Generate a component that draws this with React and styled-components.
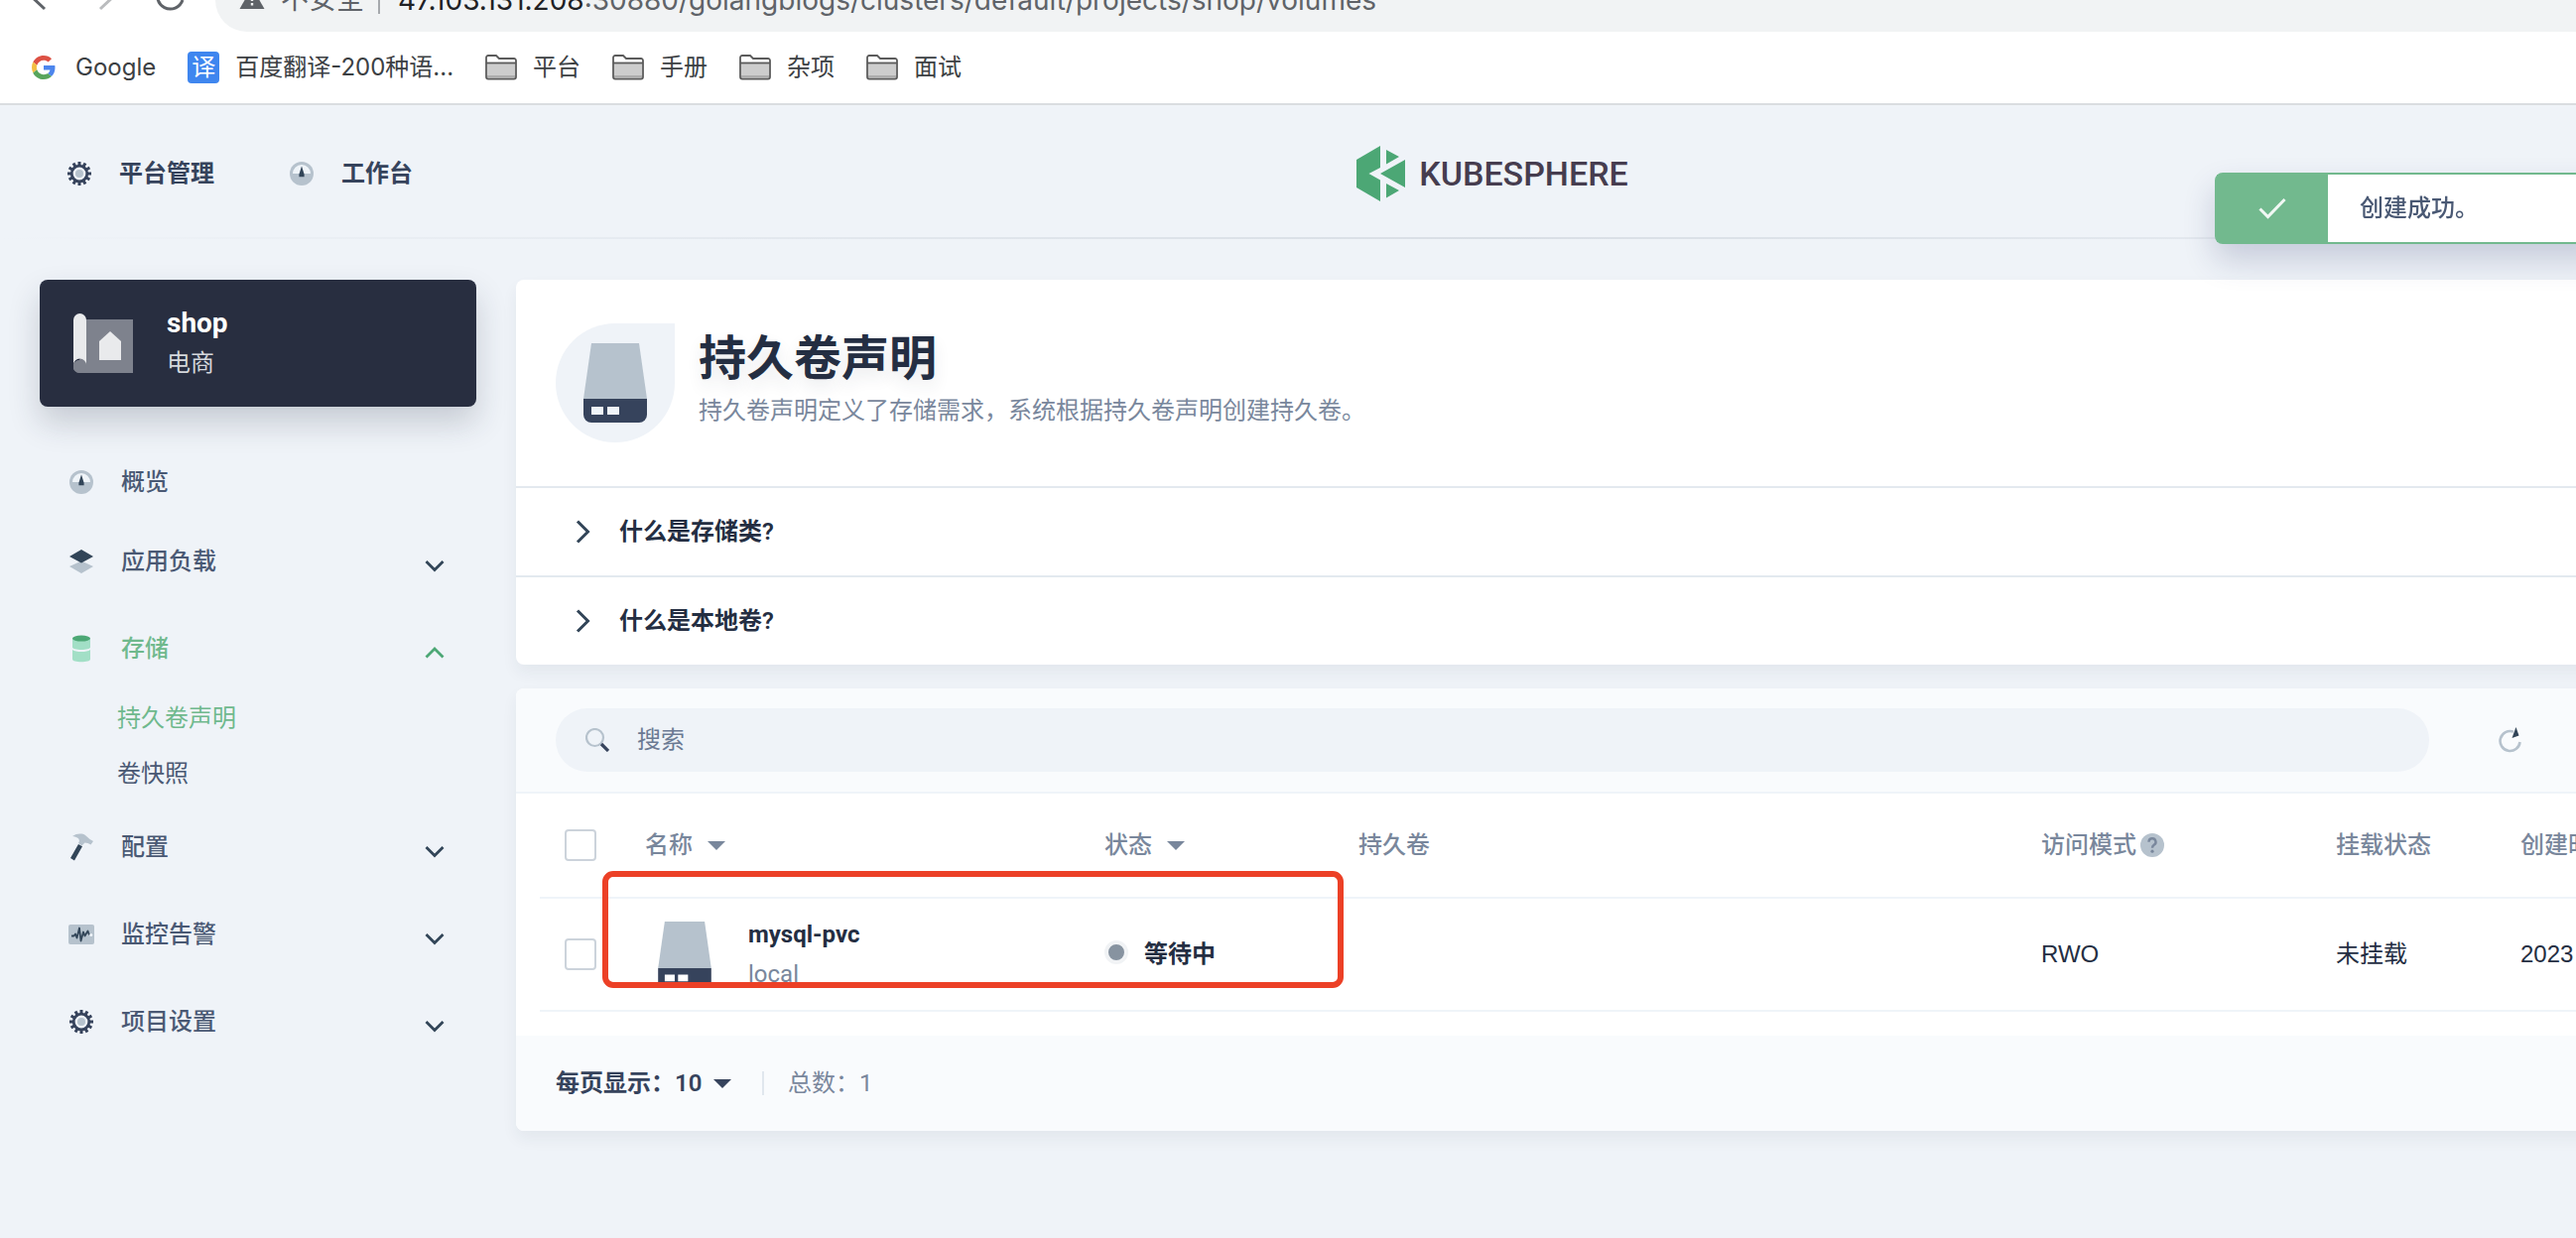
import React from 'react';
import styled, { createGlobalStyle } from 'styled-components';

const GlobalStyle = createGlobalStyle`
    *, *::before, *::after {
        box-sizing: border-box;
    }

    body {
        margin: 0;
        background: #eff3f8;
        color: #242e42;
        font-family: Roboto, 'Noto Sans CJK SC', sans-serif;
        font-size: 24px;
        line-height: 40px;
    }

    button, input, select {
        font: inherit;
        color: inherit;
        border: none;
        background: none;
        padding: 0;
        margin: 0;
    }

    a {
        color: inherit;
        text-decoration: none;
    }
`;

/* ---------- icons ---------- */

const TEETH = [0, 30, 60, 90, 120, 150, 180, 210, 240, 270, 300, 330];

const GearIcon = () => (
    <svg width="24" height="24" viewBox="0 0 24 24">
        {TEETH.map((angle) => (
            <rect key={angle} x="10.5" y="0" width="3" height="4" fill="#36435c" transform={`rotate(${angle} 12 12)`} />
        ))}
        <circle cx="12" cy="12" r="7.8" fill="none" stroke="#36435c" strokeWidth="2.8" />
        <circle cx="12" cy="12" r="4" fill="#b6c2cd" />
    </svg>
);

const DashboardIcon = () => (
    <svg width="24" height="24" viewBox="0 0 24 24">
        <circle cx="12" cy="12" r="12" fill="#b6c2cd" />
        <path d="M3 12a9 9 0 0 1 18 0z" fill="#eff4f9" />
        <path d="M12 4.5l2.6 8.2v2.6H9.4v-2.6z" fill="#324558" />
    </svg>
);

const LayersIcon = () => (
    <svg width="24" height="24" viewBox="0 0 24 24">
        <path d="M12 11.5l12 5.5-12 7-12-7z" fill="#b6c2cd" />
        <path d="M12 0l12 7-12 6.5L0 7z" fill="#324558" />
    </svg>
);

const DatabaseIcon = () => (
    <svg width="24" height="28" viewBox="0 0 24 28">
        <path d="M3 3.5h18v9c0 1.500-4 2.500-9 2.500s-9-1-9-2.500z" fill="#a2dfc6" />
        <path d="M3 15c2 1.500 5 2 9 2s7-.5 9-2v9.500c0 1.700-4 2.800-9 2.800s-9-1.100-9-2.800z" fill="#a2dfc6" />
        <ellipse cx="12" cy="3.600" rx="9" ry="3" fill="#4ca775" />
    </svg>
);

const HammerIcon = () => (
    <svg width="24" height="28" viewBox="0 0 24 28">
        <path d="M3 3C7 0 13-.2 16 2l4.500 4 3.500 2-2.500 3.500-3-1.500-3-.5-3 3-3.500-2.500C11 7 10 4 3 3z" fill="#b6c2cd" />
        <path d="M9 11l4 2.300L5 27.500 1 25z" fill="#324558" />
    </svg>
);

const MonitorIcon = () => (
    <svg width="26" height="20" viewBox="0 0 26 20">
        <rect width="26" height="20" rx="2" fill="#b6c2cd" />
        <path d="M3 11.500h2.500l1.500-2 1.500 4 2.500-10 1.500 13 2.500-9 1.500 4 3-5 1.500 4" fill="none" stroke="#324558" strokeWidth="1.800" strokeLinejoin="round" />
        <circle cx="22.800" cy="10.500" r="1.500" fill="#eff4f9" />
    </svg>
);

const ChevronIcon = ({ up }) => (
    <svg width="24" height="24" viewBox="0 0 24 24" fill="none" strokeWidth="2.800">
        <path d={up ? 'M3.500 16.500l8.500-8.500 8.500 8.500' : 'M3.500 8l8.500 8.500L20.500 8'} stroke={up ? '#4ca775' : '#324558'} />
    </svg>
);

const ChevronRightIcon = () => (
    <svg width="24" height="24" viewBox="0 0 24 24" fill="none">
        <path d="M6 1.500L16.500 12 6 22.500" stroke="#324558" strokeWidth="3" />
    </svg>
);

const CaretIcon = ({ color }) => (
    <svg width="18" height="9" viewBox="0 0 18 9">
        <path d="M0 0h18L9 9z" fill={color} />
    </svg>
);

const DiskIcon = ({ width, height, hole }) => (
    <svg width={width} height={height} viewBox="0 0 64 80">
        <path d="M8 0h48l8 56H0z" fill="#b6c2cd" />
        <path d="M0 56h64v16a8 8 0 0 1-8 8H8a8 8 0 0 1-8-8z" fill="#36435c" />
        <path d="M8 64h12v8H8zM24 64h12v8H24z" fill={hole} />
    </svg>
);

const ProjectIcon = () => (
    <svg width="60" height="60" viewBox="0 0 60 60">
        <path d="M13 6h47v54H6a6 6 0 0 1 0-13z" fill="#7e828d" />
        <path d="M0 6.500a6.500 6.500 0 0 1 13 0V52a6.500 6.500 0 0 0-13 0z" fill="#e9eaec" />
        <circle cx="6.500" cy="53.500" r="6.500" fill="#7e828d" />
        <path d="M37 18l11 10v19H26V28z" fill="#e9eaec" />
    </svg>
);

const SearchIcon = () => (
    <svg width="24" height="24" viewBox="0 0 24 24" fill="none">
        <circle cx="9.500" cy="9.500" r="8.500" stroke="#b6c2cd" strokeWidth="2.200" />
        <path d="M16 16l7 7" stroke="#36435c" strokeWidth="3.200" />
    </svg>
);

const RefreshIcon = () => (
    <svg width="24" height="26" viewBox="0 0 24 26" fill="none">
        <path d="M15 4.600A10 10 0 1 0 21.500 15" stroke="#b6c2cd" strokeWidth="2.600" />
        <path d="M17.500 0l3 8.500-7 2.500z" fill="#324558" />
    </svg>
);

const QuestionIcon = () => (
    <svg width="24" height="24" viewBox="0 0 24 24" fill="none">
        <circle cx="12" cy="12" r="12" fill="#b6c2cd" />
        <path d="M8.500 8.800a3.500 3.500 0 1 1 5.200 3c-1.200.8-1.700 1.300-1.700 3" stroke="#79879c" strokeWidth="2.400" />
        <circle cx="12" cy="18.200" r="1.600" fill="#79879c" />
    </svg>
);

const CheckIcon = () => (
    <svg width="28" height="22" viewBox="0 0 28 22" fill="none">
        <path d="M1.500 11.500l8 8L26.500 2" stroke="#f1f8f4" strokeWidth="3" />
    </svg>
);

const KubeIcon = () => (
    <svg width="49" height="56" viewBox="0 0 49 56" fill="#4ca775">
        <path d="M24 0v22l-11.500 6L24 34.500V56L0 42V14z" />
        <path d="M30 4l13 7-13 7.500zM49 14v28L24 28zM30 38l13 7-13 7.500z" />
    </svg>
);

const FolderIcon = () => (
    <svg width="32" height="26" viewBox="0 0 32 26">
        <path d="M1 3.500V22.500A2 2 0 0 0 3 24.500h26a2 2 0 0 0 2-2V6a2 2 0 0 0-2-2H14l-3-3H3a2 2 0 0 0-2 2z" fill="#fff" stroke="#5b5b5b" strokeWidth="1.800" />
        <path d="M2 8.500h28V23H2z" fill="#cdcdcd" />
        <path d="M2 21h28v2H2z" fill="#adadad" />
        <path d="M1 8.500h30" stroke="#5b5b5b" strokeWidth="1.800" />
    </svg>
);

const GoogleIcon = () => (
    <svg width="24" height="24" viewBox="0 0 48 48">
        <path fill="#dd5144" d="M24 9.500c3.540 0 6.710 1.220 9.210 3.600l6.850-6.850C35.900 2.380 30.470 0 24 0 14.620 0 6.510 5.380 2.560 13.220l7.980 6.190C12.430 13.720 17.740 9.500 24 9.500z" />
        <path fill="#4d86ed" d="M46.980 24.550c0-1.570-.15-3.090-.38-4.550H24v9.020h12.940c-.58 2.960-2.260 5.480-4.780 7.180l7.730 6c4.510-4.180 7.090-10.360 7.090-17.650z" />
        <path fill="#f3be42" d="M10.530 28.590c-.48-1.450-.76-2.990-.76-4.590s.27-3.140.76-4.590l-7.980-6.190C.92 16.460 0 20.120 0 24c0 3.880.92 7.540 2.560 10.780l7.970-6.190z" />
        <path fill="#58a55c" d="M24 48c6.480 0 11.930-2.130 15.890-5.810l-7.730-6c-2.150 1.450-4.920 2.300-8.160 2.300-6.260 0-11.570-4.220-13.470-9.910l-7.980 6.190C6.510 42.620 14.620 48 24 48z" />
    </svg>
);

const BackIcon = () => (
    <svg width="32" height="32" viewBox="0 0 32 32" fill="none">
        <path d="M21 25L6 11 21-3M6 11h26" stroke="#5f6368" strokeWidth="3" />
    </svg>
);

const ForwardIcon = () => (
    <svg width="32" height="32" viewBox="0 0 32 32" fill="none">
        <path d="M11 25l15-14L11-3M26 11H0" stroke="#babcbe" strokeWidth="3" />
    </svg>
);

const ReloadIcon = () => (
    <svg width="32" height="32" viewBox="0 0 32 32" fill="none">
        <path d="M28 16A13 13 0 1 1 25 3" stroke="#5f6368" strokeWidth="3" />
    </svg>
);

const WarningIcon = () => (
    <svg width="26" height="26" viewBox="0 0 26 26">
        <path d="M13 0l12.500 22H.5z" fill="#5f6368" />
        <path d="M11.800 8h2.400v6h-2.400zM11.800 16h2.400v2.500h-2.400z" fill="#f1f3f4" />
    </svg>
);

/* ---------- data ---------- */

const folders = ['平台', '手册', '杂项', '面试'];

const menu = [
    { name: '概览', icon: <DashboardIcon /> },
    { name: '应用负载', icon: <LayersIcon />, expandable: true },
    { name: '存储', icon: <DatabaseIcon />, expandable: true, children: ['持久卷声明', '卷快照'] },
    { name: '配置', icon: <HammerIcon />, expandable: true },
    { name: '监控告警', icon: <MonitorIcon />, expandable: true },
    { name: '项目设置', icon: <GearIcon />, expandable: true },
];

const questions = ['什么是存储类?', '什么是本地卷?'];

const volumes = [
    { name: 'mysql-pvc', storageClass: 'local', status: '等待中', mode: 'RWO', mounted: '未挂载', created: '2023' },
];

/* ---------- page ---------- */

const Browser = () => (
    <BrowserBar>
        <AddressRow>
            <BrowserButtons>
                <BrowserButton aria-label="back"><BackIcon /></BrowserButton>
                <BrowserButton aria-label="forward"><ForwardIcon /></BrowserButton>
                <BrowserButton aria-label="reload"><ReloadIcon /></BrowserButton>
            </BrowserButtons>
            <Address>
                <WarningIcon />
                <Insecure>不安全</Insecure>
                <Url><Host>47.103.131.208</Host>:30880/golangblogs/clusters/default/projects/shop/volumes</Url>
            </Address>
        </AddressRow>
        <Bookmarks>
            <Bookmark href="#google">
                <BookmarkIcon><GoogleIcon /></BookmarkIcon>
                Google
            </Bookmark>
            <Bookmark href="#fanyi">
                <TranslateBadge>译</TranslateBadge>
                百度翻译-200种语...
            </Bookmark>
            {folders.map((folder) => (
                <Bookmark key={folder} href={`#${folder}`}>
                    <BookmarkIcon><FolderIcon /></BookmarkIcon>
                    {folder}
                </Bookmark>
            ))}
        </Bookmarks>
    </BrowserBar>
);

const Sidebar = () => {
    const [open, setOpen] = React.useState('存储');

    return (
        <Side>
            <ProjectCard>
                <ProjectIcon />
                <div>
                    <ProjectName>shop</ProjectName>
                    <ProjectAlias>电商</ProjectAlias>
                </div>
            </ProjectCard>
            <nav>
                {menu.map((item) => {
                    const isOpen = item.name === open;

                    return (
                        <MenuGroup key={item.name} $expandable={item.expandable}>
                            <MenuButton $active={isOpen} onClick={() => setOpen(item.name)}>
                                <MenuIcon>{item.icon}</MenuIcon>
                                <MenuLabel>{item.name}</MenuLabel>
                                {item.expandable && <MenuArrow><ChevronIcon up={isOpen} /></MenuArrow>}
                            </MenuButton>
                            {isOpen && item.children && item.children.map((child, index) => (
                                <SubLink key={child} href={`#${child}`} $active={index === 0}>{child}</SubLink>
                            ))}
                        </MenuGroup>
                    );
                })}
            </nav>
        </Side>
    );
};

const VolumeTable = () => (
    <TableArea>
        <Table>
            <colgroup>
                <Col $width="106px" />
                <Col $width="463px" />
                <Col $width="256px" />
                <Col />
                <Col $width="297px" />
                <Col $width="186px" />
                <Col $width="404px" />
            </colgroup>
            <thead>
                <tr>
                    <Th><Checkbox type="checkbox" aria-label="全选" /></Th>
                    <Th><SortButton>名称<CaretIcon color="#79879c" /></SortButton></Th>
                    <Th><SortButton>状态<CaretIcon color="#79879c" /></SortButton></Th>
                    <Th>持久卷</Th>
                    <Th><Hinted>访问模式<QuestionIcon /></Hinted></Th>
                    <Th>挂载状态</Th>
                    <Th>创建时间</Th>
                </tr>
            </thead>
            <tbody>
                {volumes.map((volume) => (
                    <tr key={volume.name}>
                        <Td><Checkbox type="checkbox" aria-label={volume.name} /></Td>
                        <Td>
                            <NameCell>
                                <VolumeIcon><DiskIcon width={54} height={67} hole="#fff" /></VolumeIcon>
                                <div>
                                    <VolumeName href="#mysql-pvc">{volume.name}</VolumeName>
                                    <Muted>{volume.storageClass}</Muted>
                                </div>
                            </NameCell>
                        </Td>
                        <Td><Status><Dot />{volume.status}</Status></Td>
                        <Td />
                        <ValueTd>{volume.mode}</ValueTd>
                        <ValueTd>{volume.mounted}</ValueTd>
                        <ValueTd>{volume.created}</ValueTd>
                    </tr>
                ))}
            </tbody>
        </Table>
        <Highlight />
    </TableArea>
);

const App = () => {
    const [keyword, setKeyword] = React.useState('');

    return (
        <Window>
            <GlobalStyle />
            <Browser />
            <Shell>
                <Header>
                    <HeaderNav>
                        <HeaderLink href="#platform"><GearIcon />平台管理</HeaderLink>
                        <HeaderLink href="#workbench"><DashboardIcon />工作台</HeaderLink>
                    </HeaderNav>
                    <Logo href="#home"><KubeIcon /><Wordmark>KUBESPHERE</Wordmark></Logo>
                </Header>
                <HeaderLine />
                <Body>
                    <Sidebar />
                    <Main>
                        <Card>
                            <Intro>
                                <IntroIcon><DiskIcon width={64} height={80} hole="#eff4f9" /></IntroIcon>
                                <div>
                                    <Title>持久卷声明</Title>
                                    <Muted>持久卷声明定义了存储需求，系统根据持久卷声明创建持久卷。</Muted>
                                </div>
                            </Intro>
                            {questions.map((question) => (
                                <Question key={question}><ChevronRightIcon />{question}</Question>
                            ))}
                        </Card>
                        <Card>
                            <Toolbar>
                                <SearchBox>
                                    <SearchIcon />
                                    <SearchInput
                                        type="text"
                                        placeholder="搜索"
                                        aria-label="搜索"
                                        value={keyword}
                                        onChange={(ev) => setKeyword(ev.target.value)}
                                    />
                                </SearchBox>
                                <Tools>
                                    <ToolButton aria-label="刷新"><RefreshIcon /></ToolButton>
                                </Tools>
                            </Toolbar>
                            <VolumeTable />
                            <Footer>
                                <PageSize>
                                    每页显示：
                                    <SizeSelect defaultValue="10">
                                        <option>10</option>
                                    </SizeSelect>
                                    <CaretIcon color="#36435c" />
                                </PageSize>
                                <Total>总数：1</Total>
                            </Footer>
                        </Card>
                    </Main>
                </Body>
            </Shell>
            <Toast role="status">
                <ToastIcon><CheckIcon /></ToastIcon>
                <ToastText>创建成功。</ToastText>
            </Toast>
        </Window>
    );
};

const Window = styled.div`
    min-height: 100vh;
    overflow: hidden;
`

const BrowserBar = styled.header`
    background: #fff;
    border-bottom: 2px solid #dadde0;
    overflow: hidden;
`

/* scrolled half out of view */
const AddressRow = styled.div`
    display: flex;
    align-items: center;
    gap: 29px;
    height: 64px;
    margin-top: -32px;
    padding-left: 24px;
`

const BrowserButtons = styled.div`
    display: flex;
    gap: 34px;
`

const BrowserButton = styled.button`
    display: flex;
    width: 32px;
`

const Address = styled.div`
    display: flex;
    align-items: center;
    flex: 1;
    height: 64px;
    padding-left: 24px;
    border-radius: 32px 0 0 32px;
    background: #f1f3f4;
    color: #5f6368;
    font-size: 28px;
`

const Insecure = styled.span`
    margin-left: 16px;
    padding-right: 14px;
    border-right: 2px solid #a6a9ad;
    line-height: 28px;
`

const Url = styled.span`
    margin-left: 18px;
    font-family: Inter, sans-serif;
`

const Host = styled.span`
    color: #202124;
`

const Bookmarks = styled.div`
    display: flex;
    align-items: center;
    gap: 32px;
    height: 72px;
    padding-left: 28px;
    color: #3c4043;
`

const Bookmark = styled.a`
    display: flex;
    align-items: center;
    gap: 16px;
    font-family: Inter, 'Noto Sans CJK SC', sans-serif;
`

const BookmarkIcon = styled.span`
    display: flex;
    justify-content: center;
    width: 32px;
`

const TranslateBadge = styled.span`
    width: 32px;
    border-radius: 4px;
    background: #3f86ef;
    color: #fff;
    line-height: 32px;
    text-align: center;
`

/* the console is wider than the window and runs out on the right */
const Shell = styled.div`
    width: calc(100% + 412px);
`

const Header = styled.div`
    display: grid;
    grid-template-columns: 1fr auto 1fr;
    align-items: center;
    height: 133px;
    padding: 4px 68px 0;
`

const HeaderNav = styled.nav`
    display: flex;
    gap: 76px;
`

const HeaderLink = styled.a`
    display: flex;
    align-items: center;
    gap: 28px;
    color: #36435c;
    font-weight: 600;
`

const Logo = styled.a`
    display: flex;
    align-items: center;
    gap: 14px;
`

const Wordmark = styled.span`
    color: #463d4f;
    font-size: 34px;
    font-weight: 500;
`

const HeaderLine = styled.div`
    height: 2px;
    background: linear-gradient(to right, #eff3f8, #d8dee5, #eff3f8);
`

const Body = styled.div`
    display: flex;
    gap: 40px;
    padding: 41px 40px;
`

const Side = styled.aside`
    flex: none;
    width: 440px;
`

const ProjectCard = styled.div`
    display: flex;
    align-items: center;
    gap: 34px;
    height: 128px;
    margin-bottom: 36px;
    padding: 0 34px;
    border-radius: 8px;
    background: #282e40;
    box-shadow: 0 16px 32px rgba(36, 46, 66, 0.2);
`

const ProjectName = styled.div`
    color: #fff;
    font-size: 28px;
    font-weight: 700;
`

const ProjectAlias = styled.div`
    color: #d4d7dc;
`

const MenuGroup = styled.div`
    margin-bottom: ${(props) => (props.$expandable ? '8px' : '0')};
`

const MenuButton = styled.button`
    display: flex;
    align-items: center;
    width: 100%;
    height: 80px;
    padding: 0 30px;
    color: ${(props) => (props.$active ? '#6fb98d' : '#4a5974')};
    text-align: left;
    cursor: pointer;
`

const MenuIcon = styled.span`
    display: flex;
    justify-content: center;
    width: 24px;

    svg {
        flex: none;
    }
`

const MenuLabel = styled.span`
    flex: 1;
    margin-left: 28px;
    font-weight: 500;
`

const MenuArrow = styled.span`
    display: flex;
    margin-top: 8px;
`

const SubLink = styled.a`
    display: block;
    padding: 4px 0 0 78px;
    color: ${(props) => (props.$active ? '#6fb98d' : '#4a5974')};
    line-height: 52px;
`

const Main = styled.main`
    display: flex;
    flex: 1;
    flex-direction: column;
    gap: 24px;
    min-width: 0;
`

const Card = styled.section`
    border-radius: 8px;
    background: #fff;
    box-shadow: 0 8px 16px rgba(36, 46, 66, 0.06);
`

const Intro = styled.div`
    display: flex;
    gap: 24px;
    padding: 44px 40px;
`

const IntroIcon = styled.div`
    display: flex;
    align-items: center;
    justify-content: center;
    width: 120px;
    height: 120px;
    border-radius: 60px 0 60px 60px;
    background: #eff3f8;
`

const Title = styled.h1`
    margin: 0;
    padding-top: 4px;
    font-size: 48px;
    font-weight: 600;
    line-height: 64px;
    text-shadow: 0 8px 16px rgba(36, 46, 66, 0.1);
`

const Muted = styled.div`
    color: #79879c;
`

const Question = styled.button`
    display: flex;
    align-items: center;
    gap: 24px;
    width: 100%;
    height: 90px;
    padding: 0 56px;
    border-top: 2px solid #e3e9ef;
    font-weight: 600;
`

const Toolbar = styled.div`
    display: flex;
    padding: 20px 40px;
    border-bottom: 2px solid #eff4f9;
    border-radius: 8px 8px 0 0;
    background: #f9fbfd;
`

const SearchBox = styled.label`
    display: flex;
    align-items: center;
    flex: 1;
    gap: 28px;
    height: 64px;
    padding: 0 30px;
    border-radius: 32px;
    background: #eff3f8;
`

const SearchInput = styled.input`
    flex: 1;
    outline: none;

    &::placeholder {
        color: #6b7a93;
        opacity: 1;
    }
`

const Tools = styled.div`
    display: flex;
    align-items: center;
    width: 480px;
    padding-left: 70px;
`

const ToolButton = styled.button`
    display: flex;
`

const TableArea = styled.div`
    position: relative;
    padding: 0 24px 24px;
`

const Table = styled.table`
    width: 100%;
    border-spacing: 0;
    table-layout: fixed;
`

const Col = styled.col`
    width: ${(props) => props.$width || 'auto'};
`

const Th = styled.th`
    height: 106px;
    padding: 0;
    border-bottom: 2px solid #eff4f9;
    color: #79879c;
    font-weight: 500;
    text-align: left;
`

const Td = styled.td`
    height: 114px;
    padding: 0;
    border-bottom: 2px solid #eff4f9;
`

const ValueTd = styled(Td)`
    font-family: 'Liberation Sans', 'Noto Sans CJK SC', sans-serif;
`

const Checkbox = styled.input`
    display: block;
    width: 32px;
    height: 32px;
    margin-left: 25px;
    border: 2px solid #ccd3db;
    border-radius: 4px;
    background: #fff;
    appearance: none;
`

const SortButton = styled.button`
    display: flex;
    align-items: center;
    gap: 15px;
`

const Hinted = styled.span`
    display: flex;
    align-items: center;
    gap: 4px;
`

const NameCell = styled.div`
    display: flex;
    align-items: center;
    gap: 24px;
`

const VolumeIcon = styled.span`
    display: flex;
    justify-content: center;
    width: 80px;
`

const VolumeName = styled.a`
    font-weight: 700;
`

const Status = styled.span`
    display: flex;
    align-items: center;
    gap: 16px;
    font-weight: 600;
`

const Dot = styled.span`
    width: 24px;
    height: 24px;
    margin-bottom: 4px;
    border: 4px solid #f1f3f5;
    border-radius: 50%;
    background: #8793a0;
`

const Highlight = styled.div`
    position: absolute;
    top: 78px;
    left: 87px;
    width: 747px;
    height: 118px;
    border: 6px solid #ec4026;
    border-radius: 11px;
    pointer-events: none;
`

const Footer = styled.div`
    display: flex;
    align-items: center;
    gap: 31px;
    height: 96px;
    padding: 0 40px;
    border-radius: 0 0 8px 8px;
    background: #f9fbfd;
`

const PageSize = styled.label`
    display: flex;
    align-items: center;
    color: #36435c;
    font-weight: 600;
`

const SizeSelect = styled.select`
    width: 39px;
    appearance: none;
`

const Total = styled.span`
    padding-left: 24px;
    border-left: 2px solid #e0e7ee;
    color: #79879c;
    line-height: 24px;
`

const Toast = styled.div`
    position: fixed;
    top: 174px;
    right: -36px;
    display: flex;
    width: 400px;
    height: 72px;
    border: 2px solid #72b98e;
    border-radius: 8px;
    background: #fff;
    box-shadow: 0 16px 32px rgba(36, 46, 100, 0.2);
`

const ToastIcon = styled.span`
    display: flex;
    align-items: center;
    justify-content: center;
    width: 112px;
    background: #72b98e;
`

const ToastText = styled.span`
    padding-left: 32px;
    color: #4a5974;
    font-weight: 500;
    line-height: 68px;
`

export default App;
